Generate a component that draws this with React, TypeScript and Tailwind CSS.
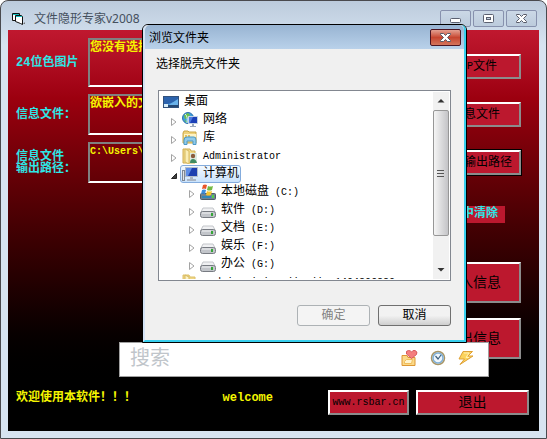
import { useState } from 'react';
import type { ReactNode } from 'react';

interface TreeItem {
  label: string;
  suffix?: string;
  icon: ReactNode;
  level: number;
  state?: 'open' | 'closed';
}

function DesktopIcon() {
  return (
    <svg width="16" height="16" viewBox="0 0 16 16" className="shrink-0">
      <rect x="0.5" y="2.5" width="15" height="11" fill="#3f86cf" stroke="#31517c" />
      <path d="M1 3h14v4L1 11z" fill="#2c63ad" />
      <path d="M4 12L15 5v7z" fill="#69b2ea" />
      <path d="M1 11h14v2H1z" fill="#244873" />
      <path d="M1 10h4v3H1z" fill="#d7edf8" />
    </svg>
  );
}

function NetworkIcon() {
  return (
    <svg width="16" height="16" viewBox="0 0 16 16" className="shrink-0">
      <circle cx="6" cy="6" r="5.5" fill="#3f9fd8" stroke="#2b6fae" />
      <path d="M2 3l4-2 2 2-2 3-3 1zM2 8l3 1v2z" fill="#6cc04a" />
      <path d="M3 2q3 2 2 9" fill="none" stroke="#d5f1fb" />
      <rect x="6.5" y="4.5" width="9" height="7" fill="#1c40b8" stroke="#c5d3e4" />
      <path d="M7 5h4l-3 6H7z" fill="#4e7be0" />
      <path d="M10 12h2v2h2v1H8v-1h2z" fill="#9aa9bd" />
    </svg>
  );
}

function LibraryIcon() {
  return (
    <svg width="16" height="16" viewBox="0 0 16 16" className="shrink-0">
      <path d="M1 3l1-2h4l1 1h7v11H1z" fill="#efd27b" stroke="#c9a545" />
      <path d="M2 4h12v3H2z" fill="#fdf3c5" />
      <path d="M3 5h2v3H3zM6 5h2v3H6z" fill="#e3bf5c" />
      <path d="M2 14.500V10q0-3 3-3h7q2 0 2 3v4.500h-3V11H5v3.500z" fill="#8fcaea" stroke="#4d99c7" />
    </svg>
  );
}

function UserFolderIcon() {
  return (
    <svg width="16" height="16" viewBox="0 0 16 16" className="shrink-0">
      <path d="M1 1h7l1 2h4v12H1z" fill="#f3dc8c" stroke="#cfac50" />
      <path d="M3 1l4 2v13l-4-2z" fill="#fbeeb5" stroke="#d6b960" />
      <rect x="8" y="5" width="7" height="10" fill="#dce9e0" />
      <circle cx="11" cy="8" r="2.2" fill="#8a5b3c" />
      <path d="M8 15q0-4 3-4t4 4z" fill="#3f8b62" />
    </svg>
  );
}

function ComputerIcon() {
  return (
    <svg width="16" height="16" viewBox="0 0 16 16" className="shrink-0">
      <rect x="0.5" y="4.5" width="2" height="10" fill="#dfe3e8" stroke="#7f8894" />
      <rect x="3.5" y="1.5" width="12" height="9" fill="#1c3fb0" stroke="#b4bfcc" />
      <path d="M4 2h6l-4 8H4z" fill="#5f8ee6" />
      <path d="M8 11h3v2h3v2H5v-2h3z" fill="#aab4c2" />
    </svg>
  );
}

function DriveIcon() {
  return (
    <svg width="16" height="16" viewBox="0 0 16 16" className="mt-1 shrink-0">
      <path d="M3 4h10l2 4H1z" fill="#f0f1f3" stroke="#c3c6ca" />
      <rect x="0.5" y="7.5" width="15" height="6" rx="2" fill="#c2c5ca" stroke="#777b82" />
      <path d="M2 9h9" stroke="#f2f3f5" />
      <rect x="11" y="9" width="2" height="3" fill="#35a637" />
    </svg>
  );
}

function SystemDriveIcon() {
  return (
    <svg width="16" height="16" viewBox="0 0 16 16" className="shrink-0">
      <rect x="0.5" y="9.5" width="15" height="6" rx="1" fill="#6f8391" stroke="#4f5d69" />
      <path d="M2 12h9v2H2z" fill="#2f86b8" />
      <rect x="12" y="11" width="2" height="3" fill="#4fd04a" />
      <path d="M3 1q2-1 4 0L6 5Q4 4 2 5z" fill="#e8562a" />
      <path d="M8 2q2 1 5 0l-1 4q-3 1-5 0z" fill="#74b943" />
      <path d="M2 6q2-1 4 0l-1 4q-2-1-4 0z" fill="#3c8ede" />
      <path d="M7 7q2 1 5 0l-1 4q-3 1-5 0z" fill="#f6c52d" />
    </svg>
  );
}

function FolderIcon() {
  return (
    <svg width="16" height="16" viewBox="0 0 16 16" className="shrink-0">
      <path d="M1 1h6l1 2h5v12H1z" fill="#f0d684" stroke="#dcc06a" />
      <path d="M3 1l4 2v12l-4-2z" fill="#fdf3c4" stroke="#d6b960" />
    </svg>
  );
}

const TREE: TreeItem[] = [
  { label: '桌面', icon: <DesktopIcon />, level: 0 },
  { label: '网络', icon: <NetworkIcon />, level: 1, state: 'closed' },
  { label: '库', icon: <LibraryIcon />, level: 1, state: 'closed' },
  { label: '', suffix: 'Administrator', icon: <UserFolderIcon />, level: 1, state: 'closed' },
  { label: '计算机', icon: <ComputerIcon />, level: 1, state: 'open' },
  { label: '本地磁盘', suffix: '(C:)', icon: <SystemDriveIcon />, level: 2, state: 'closed' },
  { label: '软件', suffix: '(D:)', icon: <DriveIcon />, level: 2, state: 'closed' },
  { label: '文档', suffix: '(E:)', icon: <DriveIcon />, level: 2, state: 'closed' },
  { label: '娱乐', suffix: '(F:)', icon: <DriveIcon />, level: 2, state: 'closed' },
  { label: '办公', suffix: '(G:)', icon: <DriveIcon />, level: 2, state: 'closed' },
  { label: '', suffix: 'sudnisuniningsjiaojiao1404806889', icon: <FolderIcon />, level: 1 },
];

const LEVEL_PADDING = ['pl-px', 'pl-2.5', 'pl-7'];

function Arrow({ state }: { state?: 'open' | 'closed' }) {
  return (
    <svg width="8" height="10" viewBox="0 0 8 10" className="mt-1 shrink-0">
      {state === 'closed' && <path d="M1.5 1.5v7L6 5z" fill="#fff" stroke="#a3a3a3" />}
      {state === 'open' && <path d="M6.5 2.5v5h-5z" fill="#404040" stroke="#262626" />}
    </svg>
  );
}

function TreeRow({ item, selected, onSelect }: { item: TreeItem; selected: boolean; onSelect: () => void }) {
  return (
    <li className={`flex h-[18px] items-center gap-0.5 ${LEVEL_PADDING[item.level]}`}>
      {item.level > 0 && <Arrow state={item.state} />}
      <button
        onClick={onSelect}
        className={`flex h-[18px] items-center gap-[5px] rounded-[3px] border px-px whitespace-nowrap ${
          selected ? 'border-[#84acdd] bg-linear-to-b from-[#f3f9ff] to-[#c9e2fc]' : 'border-transparent'
        }`}
      >
        {item.icon}
        <span className="leading-4">
          {item.label}
          {item.suffix && (
            <span className={`text-[10px] ${item.label ? 'ml-1.5' : ''}`}>{item.suffix}</span>
          )}
        </span>
      </button>
    </li>
  );
}

function CaptionButton({ label, children }: { label: string; children: ReactNode }) {
  return (
    <button
      aria-label={label}
      className="flex h-[17px] w-[31px] items-center justify-center rounded-[2px] border border-[#8791ad] bg-linear-to-b from-[#cbd8e6] to-[#bccbdc]"
    >
      {children}
    </button>
  );
}

function CloseGlyph() {
  return (
    <svg width="13" height="11" viewBox="0 0 13 11">
      <path
        d="M1.5 1.5h3l2 2 2-2h3v1l-3 3 3 3v1h-3l-2-2-2 2h-3v-1l3-3-3-3z"
        fill="#fff"
        stroke="#585b68"
      />
    </svg>
  );
}

function Field({ id, label, value, className }: { id: string; label: ReactNode; value: string; className: string }) {
  return (
    <div className="flex items-center">
      <label htmlFor={id} className="w-[72px] shrink-0 text-xs leading-3 font-bold text-[#2de6e6]">
        {label}
      </label>
      <textarea
        id={id}
        defaultValue={value}
        className={`min-w-0 flex-1 resize-none overflow-hidden border-2 border-t-[#808080] border-r-white border-b-white border-l-[#808080] font-bold text-[#f5f500] outline-none ${className}`}
      />
    </div>
  );
}

function RedButton({ className, children }: { className: string; children: ReactNode }) {
  return (
    <button
      className={`flex items-center justify-center border-2 border-t-white border-r-[#8c8c8c] border-b-[#8c8c8c] border-l-white bg-[#bc182e] text-black ${className}`}
    >
      {children}
    </button>
  );
}

function BrowseDialog() {
  const [selected, setSelected] = useState(4);

  return (
    <div
      role="dialog"
      aria-label="浏览文件夹"
      className="absolute top-[23px] left-[141px] flex w-[325px] flex-col rounded-t-md border border-black bg-[#f0f0f0] text-xs text-black"
    >
      <div className="flex flex-col rounded-t-[5px] border-r-2 border-b-2 border-l-2 border-r-[#38cfee] border-b-[#38cfee] border-l-[#d5e3f5]">
        <header className="flex h-6 items-start justify-between rounded-t-[5px] bg-linear-to-b from-[#98b4d2] to-[#b9d1ea] pr-[3px] pl-1">
          <h2 className="pt-0.5 leading-6">浏览文件夹</h2>
          <button
            aria-label="关闭"
            className="mt-1 flex h-[17px] w-[31px] items-center justify-center rounded-[2px] border border-[#4c1522] bg-linear-to-b from-[#e3a092] via-[#c6452f] to-[#d4745c]"
          >
            <CloseGlyph />
          </button>
        </header>

        <div className="flex flex-col px-[11px] pt-2 pb-3.5">
          <p className="leading-4">选择脱壳文件夹</p>

          <div className="mx-0.5 mt-[17px] flex h-[191px] overflow-hidden border border-[#828790] bg-white p-px">
            <ul className="min-w-0 flex-1 overflow-hidden pt-px">
              {TREE.map((item, index) => (
                <TreeRow
                  key={index}
                  item={item}
                  selected={selected === index}
                  onSelect={() => setSelected(index)}
                />
              ))}
            </ul>
            <div className="flex w-4 shrink-0 flex-col items-center bg-[#f1f1f1]">
              <svg width="16" height="18" viewBox="0 0 16 18">
                <path d="M4.5 10.5L8 7l3.5 3.5z" fill="#333" />
              </svg>
              <div className="flex h-[126px] w-full items-center justify-center rounded-[2px] border border-[#979797] bg-linear-to-r from-[#f5f5f5] to-[#c4c4c7]">
                <svg width="8" height="9" viewBox="0 0 8 9">
                  <path d="M0 1.5h7M0 4.5h7M0 7.5h7" stroke="#555" />
                </svg>
              </div>
              <svg width="16" height="18" viewBox="0 0 16 18" className="mt-auto">
                <path d="M4.5 7L8 10.5 11.5 7z" fill="#333" />
              </svg>
            </div>
          </div>

          <div className="mx-0.5 mt-6 flex justify-end gap-2">
            <button
              disabled
              className="h-[21px] w-[73px] rounded-[3px] border border-[#adb2b5] bg-[#f4f4f4] leading-4 text-[#838383]"
            >
              确定
            </button>
            <button className="h-[21px] w-[73px] rounded-[3px] border border-[#707070] bg-linear-to-b from-[#f2f2f2] from-50% to-[#cfcfcf] leading-4">
              取消
            </button>
          </div>
        </div>
      </div>
    </div>
  );
}

function SearchBar() {
  return (
    <div className="absolute top-[341px] left-[118px] flex h-[35px] w-[370px] items-center border border-[#a0a0a0] bg-white pr-3.5 pl-2.5">
      <input
        aria-label="搜索"
        placeholder="搜索"
        className="min-w-0 flex-1 text-xl leading-7 outline-none placeholder:text-[#c0c5ca]"
      />
      <div className="flex items-center gap-3 pb-1">
        <button aria-label="收藏">
          <svg width="17" height="18" viewBox="0 0 17 18">
            <path d="M1 6.5h5l1 2h7v8H1z" fill="#fbd987" stroke="#dc9634" />
            <path d="M3.5 12.5l2-2h6l-1 4h-7z" fill="#fff4cf" stroke="#f0bd5b" />
            <path d="M10.5 9.5L5.5 5Q4.5 1.5 7.5 1.5 9.5 1.5 10.5 3q1-2 3.5-1.5 3 1 1.5 4z" fill="#f47e7e" stroke="#d75a5e" />
          </svg>
        </button>
        <button aria-label="历史">
          <svg width="16" height="16" viewBox="0 0 16 16">
            <circle cx="8" cy="8" r="6.5" fill="#eef6fc" stroke="#a89565" strokeWidth="1.5" />
            <circle cx="8" cy="8" r="5" fill="none" stroke="#7eaed6" strokeWidth="1.5" />
            <path d="M5.5 6L8 9l3-4" fill="none" stroke="#3e607f" strokeWidth="1.2" />
          </svg>
        </button>
        <button aria-label="快捷">
          <svg width="16" height="16" viewBox="0 0 16 16">
            <path d="M5 1.5h9.5L10 6h5L2 14.5 6.5 9H1z" fill="#fbd35c" stroke="#dfa136" />
            <path d="M6 3h5L8 7.5h3" fill="none" stroke="#fff0b3" />
          </svg>
        </button>
      </div>
    </div>
  );
}

export default function App() {
  return (
    <div className="bg-white font-['Liberation_Mono','Noto_Sans_CJK_SC',monospace]">
      <div className="relative flex min-h-screen flex-col overflow-hidden rounded-t-lg border border-[#4a4a4e] bg-linear-to-b from-[#bccbdc] to-[#d7e4f1] to-10% px-[7px] pb-[7px]">
        <header className="flex h-[29px] shrink-0 items-start justify-between pr-0.5 pl-1">
          <div className="flex items-center gap-2 pt-2">
            <svg width="14" height="14" viewBox="0 0 14 14">
              <path d="M0.5 1.5h7v7h-7z" fill="#fff" stroke="#111" />
              <path d="M1 2.5h6" stroke="#18c0c0" />
              <path d="M3.5 3.5h6l1 1v8l-2-1-5-2z" fill="#fff" stroke="#111" />
              <path d="M4 4.5h6" stroke="#18c0c0" />
              <path d="M11 12l2-2v2z" fill="#777" />
            </svg>
            <h1 className="font-['Noto_Sans','Noto_Sans_CJK_SC',sans-serif] text-xs leading-5 text-[#45505e]">
              文件隐形专家v2008
            </h1>
          </div>
          <div className="flex gap-0.5 pt-[9px]">
            <CaptionButton label="最小化">
              <svg width="12" height="11" viewBox="0 0 12 11">
                <rect x="0.5" y="5.5" width="10" height="4" rx="1" fill="#fff" stroke="#5b6070" />
              </svg>
            </CaptionButton>
            <CaptionButton label="最大化">
              <svg width="11" height="9" viewBox="0 0 11 9">
                <rect x="0.5" y="0.5" width="10" height="8" rx="1" fill="#fff" stroke="#5b6070" />
                <rect x="3.5" y="3.5" width="4" height="2" fill="#c3d1e0" stroke="#5b6070" />
              </svg>
            </CaptionButton>
            <CaptionButton label="关闭窗口">
              <CloseGlyph />
            </CaptionButton>
          </div>
        </header>

        <main className="flex flex-1 flex-col bg-linear-to-b from-[#c0182f] via-[#9c000f] via-17% to-black to-90% px-2 pt-2 pb-4">
          <div className="flex justify-between gap-4 pr-2.5">
            <div className="flex min-w-0 flex-1 flex-col gap-[7px]">
              <Field id="image" label="24位色图片" value="您没有选择" className="h-[49px] text-xs leading-4" />
              <Field id="file" label="信息文件：" value="欲嵌入的文" className="h-[41px] text-xs leading-4" />
              <Field
                id="output"
                label={
                  <>
                    信息文件
                    <br />
                    输出路径：
                  </>
                }
                value="C:\Users\"
                className="h-[41px] text-[10px] leading-4"
              />
            </div>

            <div className="flex flex-col items-end pt-4">
              <div className="flex flex-col gap-[23px]">
                <RedButton className="h-[25px] w-[90px] text-xs">
                  <span className="text-[10px]">BMP</span>文件
                </RedButton>
                <RedButton className="h-[25px] w-[90px] text-xs">信息文件</RedButton>
                <RedButton className="h-[25px] w-[90px] text-xs outline outline-black">选择输出路径</RedButton>
              </div>
              <button className="mt-[31px] mr-4 bg-[#bc182e] pr-[7px] text-xs leading-[17px] font-bold text-[#2de6e6]">
                图中清除
              </button>
              <RedButton className="mt-[39px] h-[41px] w-24 text-sm">嵌入信息</RedButton>
              <RedButton className="mt-[15px] h-[41px] w-24 text-sm">导出信息</RedButton>
            </div>
          </div>

          <footer className="mt-auto flex items-start gap-[7px] pr-0.5">
            <div className="flex flex-1 justify-between gap-4 pr-12 text-xs leading-4 font-bold whitespace-nowrap text-[#f5f500]">
              <p>欢迎使用本软件！！！</p>
              <p>welcome</p>
            </div>
            <RedButton className="h-[25px] w-[81px] text-[10px]">www.rsbar.cn</RedButton>
            <RedButton className="h-[25px] w-[113px] text-sm">退出</RedButton>
          </footer>
        </main>

        <SearchBar />
        <BrowseDialog />
      </div>
    </div>
  );
}
